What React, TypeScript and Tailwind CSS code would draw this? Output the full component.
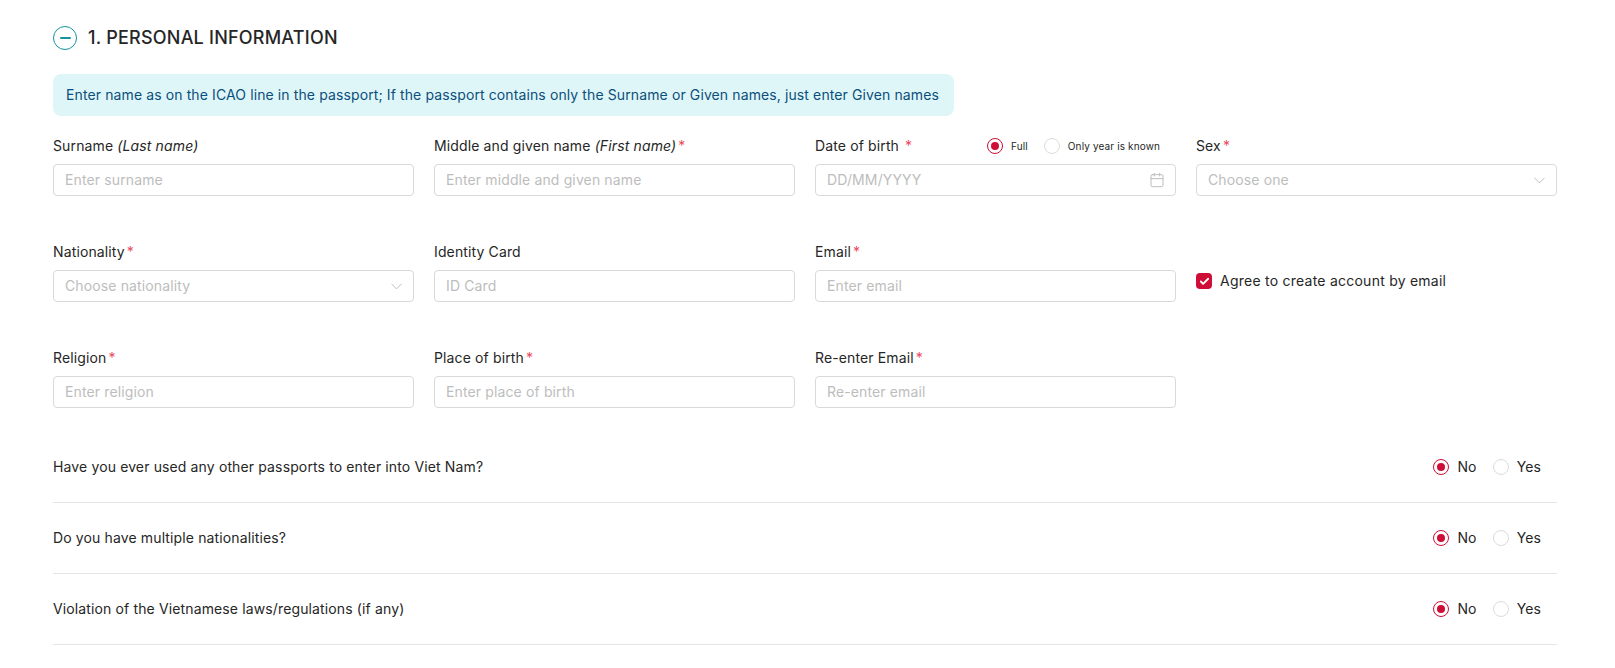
import { Calendar, ChevronDown, Check } from "lucide-react";
import type { ReactNode } from "react";

function Req() {
  return <span className="ml-[2px] text-[#eb4a62]">*</span>;
}

function Radio({ checked, small, label }: { checked?: boolean; small?: boolean; label: string }) {
  return (
    <span className="flex items-center">
      <span
        className={
          checked
            ? "flex h-4 w-4 items-center justify-center rounded-full border border-[#ce0e37] bg-white"
            : "flex h-4 w-4 items-center justify-center rounded-full border border-[#dcdcdc] bg-white"
        }
      >
        {checked && <span className="h-2 w-2 rounded-full bg-[#ce0e37]" />}
      </span>
      <span className={small ? "ml-2 text-[10px] text-[#262626]" : "ml-2 text-sm text-[#262626]"}>{label}</span>
    </span>
  );
}

function Field({ label, placeholder, icon, extra }: { label: ReactNode; placeholder: string; icon?: ReactNode; extra?: ReactNode }) {
  return (
    <div>
      <div className="flex h-[19px] items-center justify-between text-sm leading-5 text-[#262626]">
        <span>{label}</span>
        {extra}
      </div>
      <div className="mt-[9px] flex h-8 items-center justify-between rounded border border-[#d9d9d9] bg-white pl-[11px] pr-[9px] text-sm text-[#bdbdbd]">
        <span>{placeholder}</span>
        {icon}
      </div>
    </div>
  );
}

function Question({ text }: { text: string }) {
  return (
    <div className="flex h-[71px] items-center justify-between border-b border-[#e5e5e5] pb-px pr-4 text-sm text-[#262626]">
      <span>{text}</span>
      <div className="flex items-center gap-4">
        <Radio checked label="No" />
        <Radio label="Yes" />
      </div>
    </div>
  );
}

export default function App() {
  return (
    <div className="min-h-screen bg-white pl-[53px] pr-[58px] pt-6 font-['Inter',sans-serif] tracking-[0.13px]">
      <div className="flex items-center">
        <span className="flex h-6 w-6 items-center justify-center rounded-full border border-[#13939b]">
          <span className="h-[2px] w-[11px] rounded bg-[#13939b]" />
        </span>
        <h2 className="ml-[11px] text-lg font-medium tracking-[0.22px] text-[#262626]">1. PERSONAL INFORMATION</h2>
      </div>

      <div className="mt-[22px] flex h-[42px] w-[901px] items-center rounded-lg bg-[#dff6f9] pl-[13px] text-sm tracking-[0.11px] text-[#0b4f7a]">
        Enter name as on the ICAO line in the passport; If the passport contains only the Surname or Given names, just enter Given names
      </div>

      <div className="mt-5 grid grid-cols-4 gap-x-5 gap-y-[46px]">
        <Field label={<>Surname <i>(Last name)</i></>} placeholder="Enter surname" />
        <Field label={<>Middle and given name <i>(First name)</i><Req /></>} placeholder="Enter middle and given name" />
        <Field
          label={<>Date of birth <Req /></>}
          placeholder="DD/MM/YYYY"
          icon={<Calendar size={16} strokeWidth={1.5} className="mr-px text-[#bdbdbd]" />}
          extra={
            <span className="mr-[16px] flex items-center gap-4">
              <Radio checked small label="Full" />
              <Radio small label="Only year is known" />
            </span>
          }
        />
        <Field label={<>Sex<Req /></>} placeholder="Choose one" icon={<ChevronDown size={19} strokeWidth={1.25} className="-mr-[2px] text-[#bdbdbd]" />} />

        <Field label={<>Nationality<Req /></>} placeholder="Choose nationality" icon={<ChevronDown size={19} strokeWidth={1.25} className="-mr-[2px] text-[#bdbdbd]" />} />
        <Field label="Identity Card" placeholder="ID Card" />
        <Field label={<>Email<Req /></>} placeholder="Enter email" />
        <div className="flex items-center pt-[18px] text-sm tracking-[0.24px] text-[#262626]">
          <span className="flex h-4 w-4 items-center justify-center rounded-sm bg-[#ce0e37]">
            <Check size={11} strokeWidth={4} className="text-white" />
          </span>
          <span className="ml-2">Agree to create account by email</span>
        </div>

        <Field label={<>Religion<Req /></>} placeholder="Enter religion" />
        <Field label={<>Place of birth<Req /></>} placeholder="Enter place of birth" />
        <Field label={<>Re-enter Email<Req /></>} placeholder="Re-enter email" />
      </div>

      <div className="mt-6">
        <Question text="Have you ever used any other passports to enter into Viet Nam?" />
        <Question text="Do you have multiple nationalities?" />
        <Question text="Violation of the Vietnamese laws/regulations (if any)" />
      </div>
    </div>
  );
}
